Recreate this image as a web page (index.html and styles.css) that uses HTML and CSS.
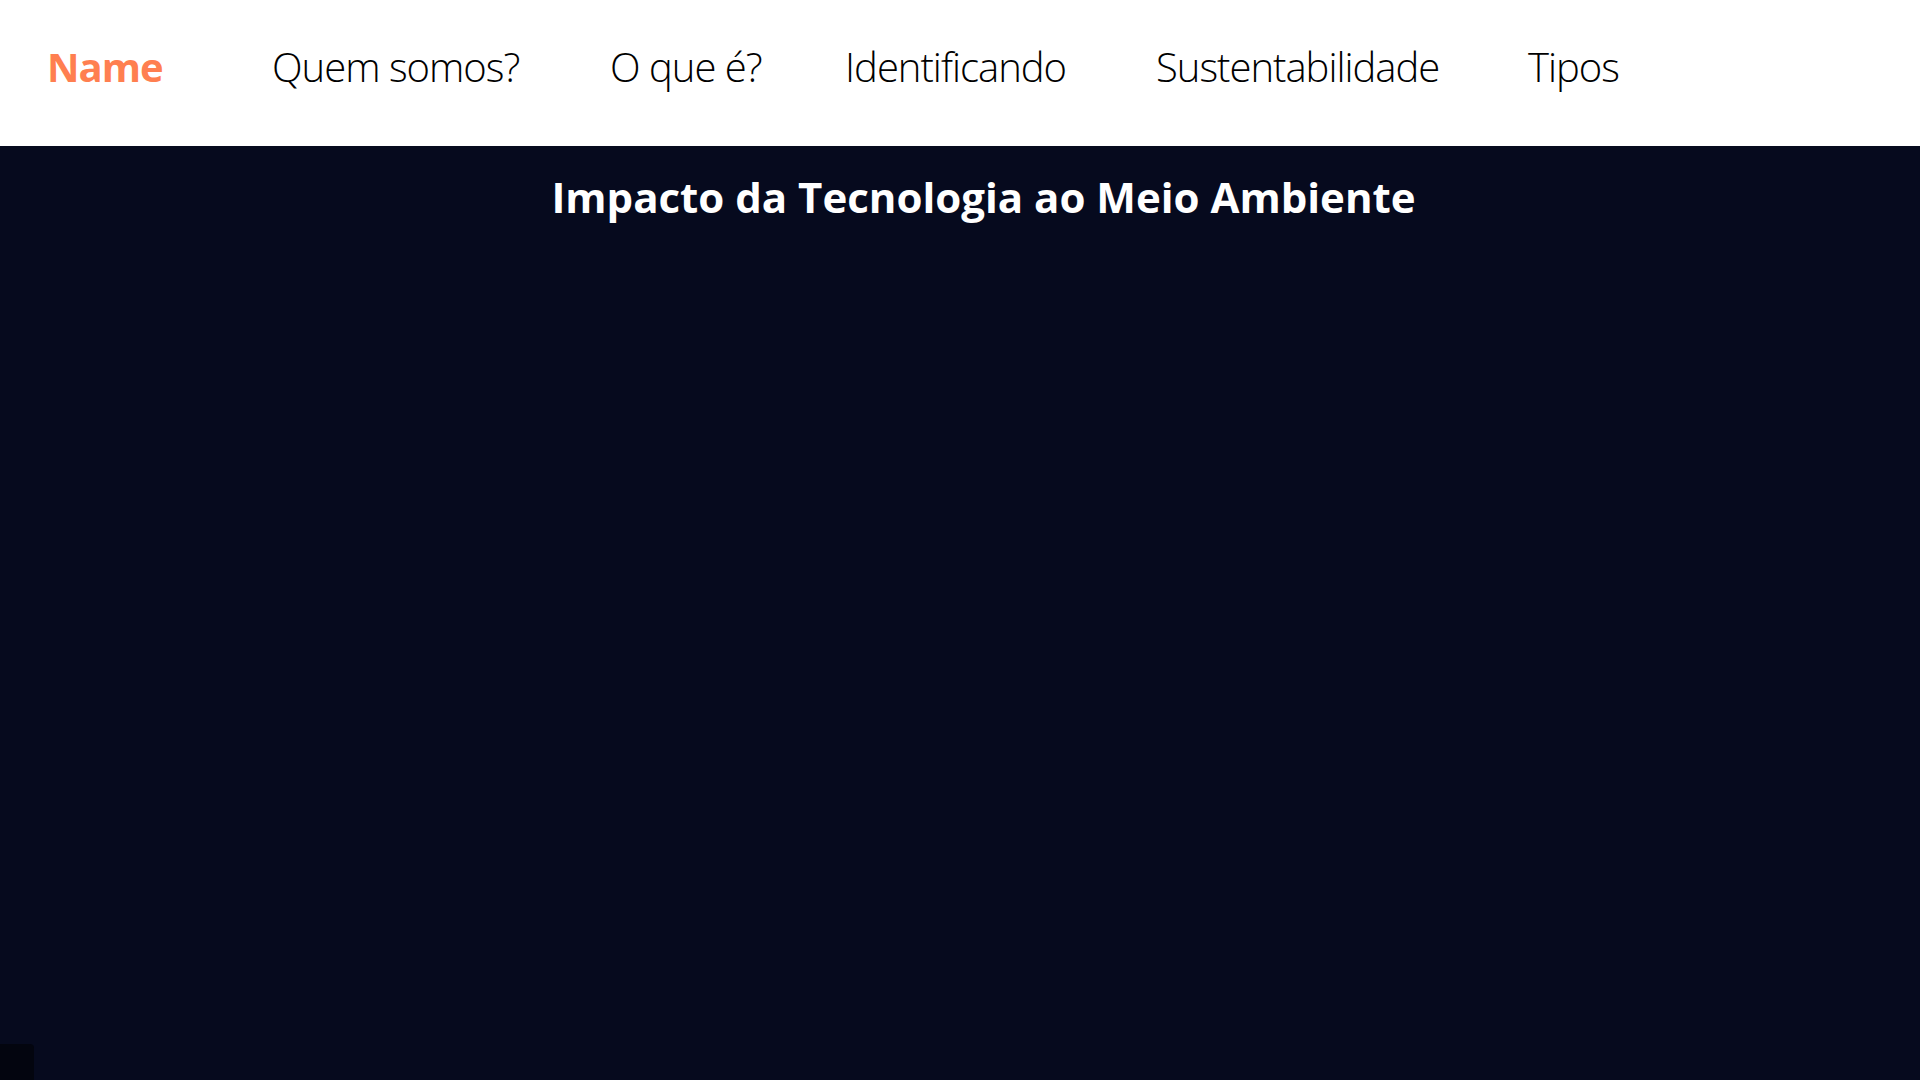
FILE: index.html
```html
<!DOCTYPE html>
<html lang="pt-BR">
<head>
<meta charset="utf-8">
<title>Impacto da Tecnologia ao Meio Ambiente</title>
<link rel="stylesheet" href="styles.css">
</head>
<body>
<header class="topbar">
  <a class="brand" href="#">Name</a>
  <nav class="menu">
    <a class="menu-link" href="#">Quem somos?</a>
    <a class="menu-link" href="#">O que é?</a>
    <a class="menu-link" href="#">Identificando</a>
    <a class="menu-link" href="#">Sustentabilidade</a>
    <a class="menu-link" href="#">Tipos</a>
  </nav>
</header>
<main class="hero">
  <h1 class="hero-title">Impacto da Tecnologia ao Meio Ambiente</h1>
</main>
<div class="corner"></div>
</body>
</html>
```
FILE: styles.css
```css
* { box-sizing: border-box; }
html, body { margin: 0; padding: 0; height: 100%; }
body {
  background: #060a1e;
  font-family: "Open Sans", "Noto Sans", sans-serif;
  overflow: hidden;
}
.topbar {
  height: 146px;
  background: #ffffff;
  display: grid;
  grid-template-columns: 225px 1fr;
  align-items: center;
  padding-left: 47px;
  padding-bottom: 12px;
}
.brand {
  color: #ff7f50;
  font-weight: 700;
  font-size: 40px;
  text-decoration: none;
  line-height: 1;
  letter-spacing: -1px;
}
.menu {
  display: grid;
  grid-template-columns: 338px 235px 311px 372px auto;
  align-items: center;
}
.menu-link {
  color: #000;
  font-weight: 300;
  font-size: 40px;
  text-decoration: none;
  line-height: 1;
  letter-spacing: -1px;
}
.hero {
  height: calc(100% - 146px);
  padding-left: 47px;
  text-align: center;
}
.hero-title {
  margin: 0;
  padding-top: 24px;
  color: #fff;
  font-weight: 700;
  font-size: 42px;
  line-height: 1.3;
  letter-spacing: 0;
}
.corner {
  position: fixed;
  left: 0;
  bottom: 0;
  width: 34px;
  height: 36px;
  background: #03050f;
  border-top-right-radius: 4px;
}
```
